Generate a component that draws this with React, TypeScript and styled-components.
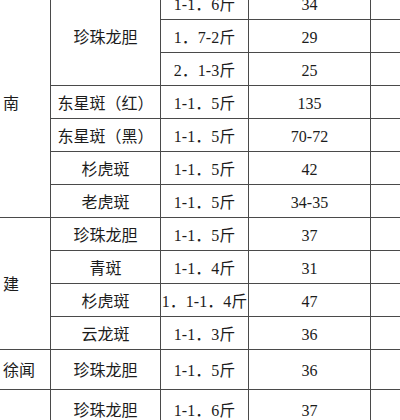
import React from 'react';
import styled, { createGlobalStyle } from 'styled-components';

const GlobalStyle = createGlobalStyle`
  html, body {
    margin: 0;
    padding: 0;
    background: #ffffff;
    overflow: hidden;
  }
  body {
    font-family: "Liberation Serif", "Noto Sans CJK SC", serif;
  }
`;

const Page = styled.div`
  width: 400px;
  height: 420px;
  overflow: hidden;
  background: #ffffff;
`;

const Table = styled.table`
  width: 451px;
  border-collapse: collapse;
  table-layout: fixed;
  margin-top: -14px;
  margin-left: -1px;
  font-size: 16px;
  color: #1c1c1c;
`;

const Col = styled.col<{ $w: number }>`
  width: ${(p) => p.$w}px;
`;

const Row = styled.tr<{ $h?: number }>`
  height: ${(p) => p.$h ?? 33}px;
`;

const Cell = styled.td`
  border: 1px solid #4a4a4a;
  padding: 3px 0 0 0;
  text-align: center;
  vertical-align: middle;
  white-space: nowrap;
  line-height: 1;
`;

const RegionCell = styled(Cell)`
  text-align: left;
  padding-left: 3px;
  border-left-color: transparent;
`;

type Line = {
  region?: { name: string; span: number };
  fish?: { name: string; span: number };
  weight: string;
  price: string;
  h?: number;
};

const widths = [51, 110, 88, 122, 80];

const lines: Line[] = [
  { region: { name: '南', span: 7 }, fish: { name: '珍珠龙胆', span: 3 }, weight: '1-1．6斤', price: '34' },
  { weight: '1．7-2斤', price: '29' },
  { weight: '2．1-3斤', price: '25' },
  { fish: { name: '东星斑（红）', span: 1 }, weight: '1-1．5斤', price: '135' },
  { fish: { name: '东星斑（黑）', span: 1 }, weight: '1-1．5斤', price: '70-72' },
  { fish: { name: '杉虎斑', span: 1 }, weight: '1-1．5斤', price: '42' },
  { fish: { name: '老虎斑', span: 1 }, weight: '1-1．5斤', price: '34-35' },
  { region: { name: '建', span: 4 }, fish: { name: '珍珠龙胆', span: 1 }, weight: '1-1．5斤', price: '37' },
  { fish: { name: '青斑', span: 1 }, weight: '1-1．4斤', price: '31' },
  { fish: { name: '杉虎斑', span: 1 }, weight: '1．1-1．4斤', price: '47' },
  { fish: { name: '云龙斑', span: 1 }, weight: '1-1．3斤', price: '36' },
  { region: { name: '徐闻', span: 1 }, fish: { name: '珍珠龙胆', span: 1 }, weight: '1-1．5斤', price: '36', h: 40 },
  { region: { name: '', span: 1 }, fish: { name: '珍珠龙胆', span: 1 }, weight: '1-1．6斤', price: '37', h: 40 },
];

const App: React.FC = () => {
  return (
    <Page>
      <GlobalStyle />
      <Table>
        <colgroup>
          {widths.map((w, i) => (
            <Col key={i} $w={w} />
          ))}
        </colgroup>
        <tbody>
          {lines.map((l, i) => (
            <Row key={i} $h={l.h}>
              {l.region && <RegionCell rowSpan={l.region.span}>{l.region.name}</RegionCell>}
              {l.fish && <Cell rowSpan={l.fish.span}>{l.fish.name}</Cell>}
              <Cell>{l.weight}</Cell>
              <Cell>{l.price}</Cell>
              <Cell />
            </Row>
          ))}
        </tbody>
      </Table>
    </Page>
  );
};

export default App;
